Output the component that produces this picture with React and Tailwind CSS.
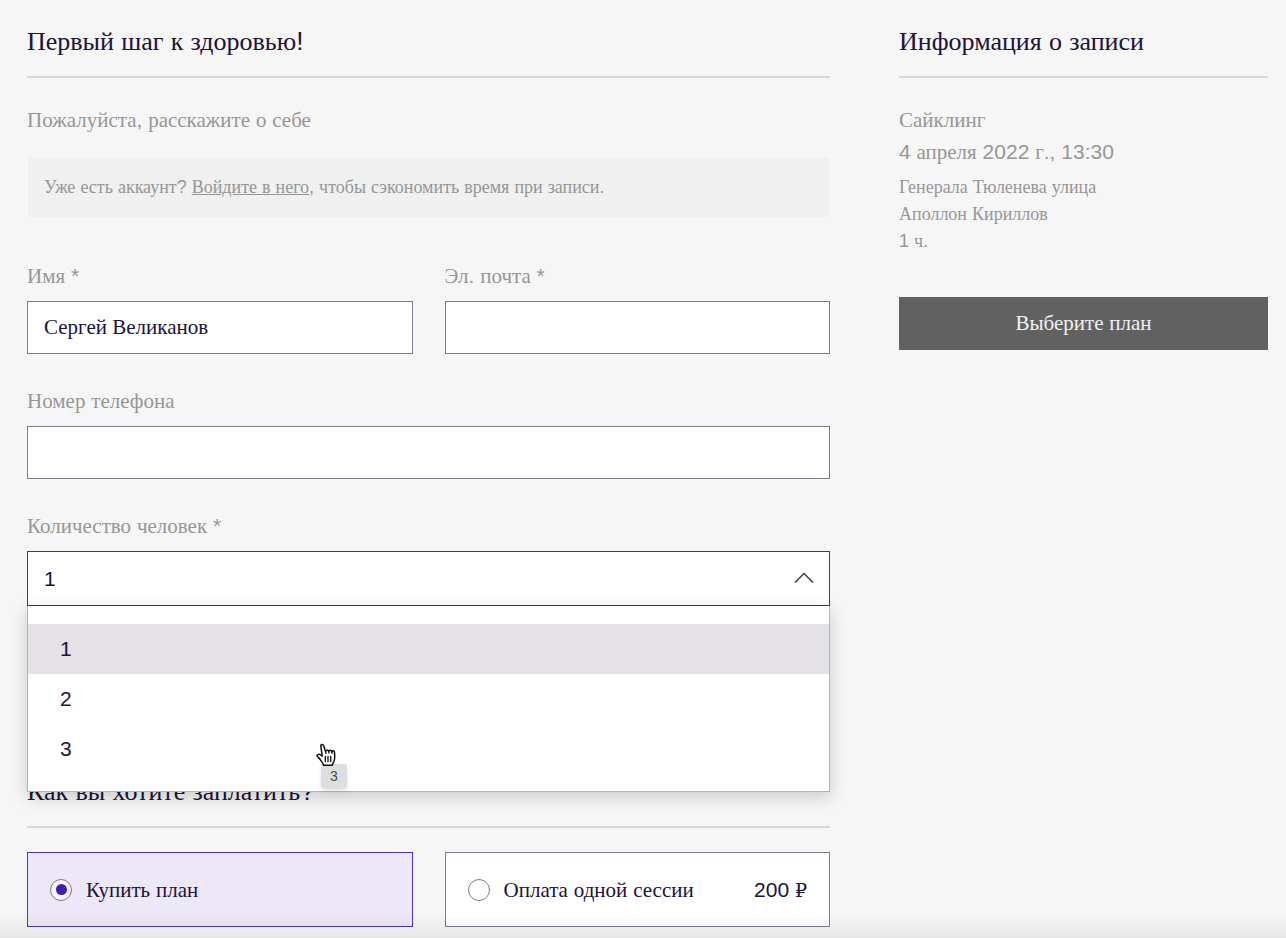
import { useState } from "react";

const SERIF = "font-['Liberation_Serif','DejaVu_Serif',serif]";
const SANS = "font-['Liberation_Sans',sans-serif]";

// Cyrillic words use the serif face; digits, spaces and punctuation use the sans face.
function Mixed({ children }) {
  return children
    .split(/([А-Яа-яЁё]+|₽)/)
    .filter(Boolean)
    .map((part, i) => {
      if (part === "₽") return <span key={i} className="font-['DejaVu_Serif',serif] text-[19px]">{part}</span>;
      if (/[А-Яа-яЁё]/.test(part)) return <span key={i} className={SERIF}>{part}</span>;
      return <span key={i}>{part}</span>;
    });
}

function Heading({ children }) {
  return (
    <h2 className="border-b-2 border-[#d8d8dc] pb-[18px] text-[26px] leading-8 text-[#20123a]">
      <Mixed>{children}</Mixed>
    </h2>
  );
}

function Field({ id, label, children }) {
  return (
    <div className="flex min-w-0 flex-col gap-[13px]">
      <label htmlFor={id} className="text-[21px] leading-6 text-[#969696]">
        <Mixed>{label}</Mixed>
      </label>
      {children}
    </div>
  );
}

function TextInput(props) {
  return (
    <input
      {...props}
      className="h-[53px] w-full border border-[#82798f] bg-white px-4 font-['Liberation_Serif',serif] text-[21px] text-[#20123a] outline-none"
    />
  );
}

function Plan({ value, label, price, selected, onSelect }) {
  return (
    <label
      className={`flex h-[75px] items-center border px-[22px] text-[21px] leading-6 text-[#20123a] ${
        selected ? "border-[#5634b8] bg-[#ece8f7]" : "border-[#82798f] bg-white"
      }`}
    >
      <input
        type="radio"
        name="plan"
        value={value}
        checked={selected}
        onChange={() => onSelect(value)}
        className="mr-[14px] grid size-[22px] shrink-0 appearance-none place-items-center rounded-full border border-[#82798f] bg-white/50 before:size-[11px] before:rounded-full checked:before:bg-[#451bb6]"
      />
      <span className="flex-1"><Mixed>{label}</Mixed></span>
      {price && <span><Mixed>{price}</Mixed></span>}
    </label>
  );
}

function HandPointer() {
  return (
    <svg viewBox="0 0 20 24" className="h-6 w-5" aria-hidden="true">
      <path
        d="M6.2 13.2 4.6 12C3.2 10.9.9 11.3 1 12.7c0 .9 1.8 1.9 3 3.6l2 2.8c.9 1.1 1.4 1.7 1.6 3.2h8.8c.1-1.6.9-2.4 1.5-3.8.6-1.5.9-4 .8-6.2l-.2-3.2c-.2-1.9-2.5-1.8-2.6-.2-.3-2.1-2.9-2.2-3.2-.5-.5-1.6-2.8-1.6-3.2-.1L7.6 2.6C6.8.7 4.3 1.4 4.9 3.6Z"
        fill="#fff"
        stroke="#111"
        strokeWidth="1.5"
        strokeLinejoin="round"
      />
      <path
        d="m9.5 8.3.5 2M12.7 7.8l.2 2.2M15.9 8.3v2M9.3 13.5v5M12 13.5v5M14.7 13.5v5"
        fill="none"
        stroke="#111"
        strokeWidth="1.3"
        strokeLinecap="round"
      />
    </svg>
  );
}

const COUNTS = ["1", "2", "3"];

export default function App() {
  const [name, setName] = useState("Сергей Великанов");
  const [count, setCount] = useState("1");
  const [plan, setPlan] = useState("plan");

  return (
    <div className={`min-h-screen bg-[#f6f6f6] pt-[25px] pr-[18px] pl-[27px] ${SANS}`}>
      <main className="grid grid-cols-[803fr_369fr] gap-x-[69px]">
        <form className="min-w-0">
          <Heading>Первый шаг к здоровью!</Heading>
          <p className="mt-[30px] text-[21px] leading-6 text-[#969696]">
            <Mixed>Пожалуйста, расскажите о себе</Mixed>
          </p>
          <p className="mx-px mt-[26px] rounded-xs bg-[#f0f0f0] px-4 py-4 text-[18px] leading-[27px] text-[#969696]">
            <Mixed>Уже есть аккаунт? </Mixed>
            <a href="#login" className="underline"><Mixed>Войдите в него</Mixed></a>
            <Mixed>, чтобы сэкономить время при записи.</Mixed>
          </p>

          <div className="mt-[47px] flex flex-col gap-[35px]">
            <div className="grid grid-cols-2 gap-8">
              <Field id="name" label="Имя *">
                <TextInput id="name" value={name} onChange={(e) => setName(e.target.value)} />
              </Field>
              <Field id="email" label="Эл. почта *">
                <TextInput id="email" type="email" />
              </Field>
            </div>
            <Field id="phone" label="Номер телефона">
              <TextInput id="phone" type="tel" />
            </Field>
            <Field id="count" label="Количество человек *">
              <div className="relative z-10">
                <select
                  id="count"
                  value={count}
                  onChange={(e) => setCount(e.target.value)}
                  className="block h-[55px] w-full appearance-none border border-[#45375c] bg-white px-4 text-[21px] text-[#20123a] outline-none"
                >
                  {COUNTS.map((n) => <option key={n}>{n}</option>)}
                </select>
                <svg viewBox="0 0 20 12" className="pointer-events-none absolute top-[21px] right-4 h-3 w-5" aria-hidden="true">
                  <path d="m1 10.5 9-9 9 9" fill="none" stroke="#45375c" strokeWidth="1.5" />
                </svg>
                <div className="absolute top-full right-0 left-0 border border-t-0 border-[#b5b1bf] bg-white pt-[18px] pb-[17px] shadow-[0_5px_16px_rgba(0,0,0,0.18)]">
                  <ul role="listbox" aria-label="Количество человек">
                    {COUNTS.map((n) => (
                      <li key={n} role="option" aria-selected={n === count}>
                        <button
                          type="button"
                          onClick={() => setCount(n)}
                          className={`block h-[50px] w-full px-8 text-left text-[21px] text-[#20123a] ${
                            n === count ? "bg-[#e4e2e7]" : ""
                          }`}
                        >
                          {n}
                        </button>
                      </li>
                    ))}
                  </ul>
                  <span role="tooltip" className="absolute bottom-[3px] left-[293px] rounded-xs bg-[#dedede] px-[9px] text-[14px] leading-6 text-[#4a4a4a] shadow-md">
                    3
                  </span>
                  <div className="pointer-events-none absolute bottom-6 left-[288px]">
                    <HandPointer />
                  </div>
                </div>
              </div>
            </Field>
          </div>

          <div className="mt-[169px]">
            <Heading>Как вы хотите заплатить?</Heading>
          </div>
          <div className="mt-6 grid grid-cols-2 gap-8">
            <Plan value="plan" label="Купить план" selected={plan === "plan"} onSelect={setPlan} />
            <Plan value="single" label="Оплата одной сессии" price="200 ₽" selected={plan === "single"} onSelect={setPlan} />
          </div>
        </form>

        <aside className="min-w-0 text-[#969696]">
          <Heading>Информация о записи</Heading>
          <div className="mt-[26px] text-[21px] leading-[31px]">
            <p><Mixed>Сайклинг</Mixed></p>
            <p><Mixed>4 апреля 2022 г., 13:30</Mixed></p>
          </div>
          <div className="mt-[6px] text-[18px] leading-[27px]">
            <p><Mixed>Генерала Тюленева улица</Mixed></p>
            <p><Mixed>Аполлон Кириллов</Mixed></p>
            <p><Mixed>1 ч.</Mixed></p>
          </div>
          <button type="button" className="mt-[42px] h-[53px] w-full bg-[#616161] text-[21px] text-[#f2f2f2]">
            <Mixed>Выберите план</Mixed>
          </button>
        </aside>
      </main>
      <div className="pointer-events-none fixed inset-x-0 bottom-0 h-6 bg-linear-to-t from-black/6 to-transparent" />
    </div>
  );
}
